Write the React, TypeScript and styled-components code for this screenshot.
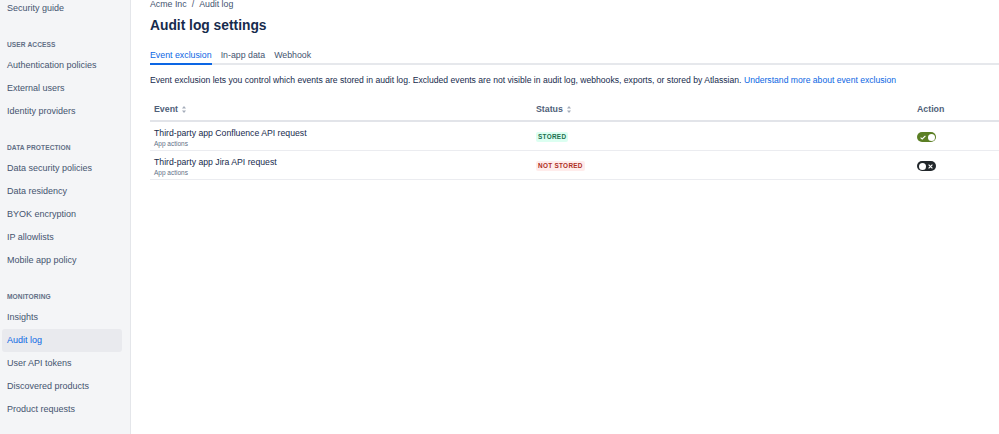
import React from "react";
import styled, { createGlobalStyle } from "styled-components";

const GlobalStyle = createGlobalStyle`
  html, body {
    margin: 0;
    padding: 0;
    background: #ffffff;
    font-family: "Liberation Sans", Arial, sans-serif;
    color: #172b4d;
    overflow: hidden;
  }
  * { box-sizing: border-box; }
`;

const Layout = styled.div`
  display: flex;
  width: 999px;
  height: 434px;
  overflow: hidden;
`;

const Sidebar = styled.aside`
  width: 131px;
  flex-shrink: 0;
  background: #f4f5f7;
  border-right: 1px solid #e4e6ea;
  padding: 0 8px 0 2px;
`;

const NavList = styled.nav`
  display: flex;
  flex-direction: column;
  margin-top: -3px;
`;

const NavHeading = styled.div`
  font-size: 6.6px;
  font-weight: 700;
  letter-spacing: 0.1px;
  color: #626f86;
  line-height: 10px;
  padding-left: 5px;
  margin: 20px 0 4px;
`;

const NavItem = styled.a<{ $active?: boolean }>`
  display: block;
  height: 23px;
  line-height: 23px;
  padding-left: 5px;
  border-radius: 3px;
  font-size: 9px;
  color: ${(p) => (p.$active ? "#0c66e4" : "#44546f")};
  background: ${(p) => (p.$active ? "#e9eaee" : "transparent")};
  text-decoration: none;
  white-space: nowrap;
`;

const Main = styled.main`
  flex: 1;
  padding: 0 0 0 19px;
  min-width: 0;
`;

const Breadcrumb = styled.div`
  margin-top: -2px;
  font-size: 8.8px;
  line-height: 12px;
  color: #44546f;

  span {
    margin: 0 5px;
  }
`;

const Title = styled.h1`
  margin: 6px 0 0;
  font-size: 13.8px;
  line-height: 20px;
  font-weight: 700;
  color: #172b4d;
`;

const Tabs = styled.div`
  display: flex;
  gap: 9px;
  margin-top: 9px;
  border-bottom: 2px solid #e6e8ec;
`;

const Tab = styled.div<{ $active?: boolean }>`
  font-size: 8.8px;
  line-height: 12px;
  padding: 4px 0 2px;
  margin-bottom: -2px;
  color: ${(p) => (p.$active ? "#0c66e4" : "#44546f")};
  border-bottom: 2px solid ${(p) => (p.$active ? "#0c66e4" : "transparent")};
`;

const Description = styled.p`
  margin: 9px 0 0;
  font-size: 8.62px;
  line-height: 12px;
  color: #172b4d;
  white-space: nowrap;

  a {
    color: #0c66e4;
    text-decoration: none;
  }
`;

const Table = styled.div`
  margin-top: 10px;
  display: grid;
  grid-template-columns: 382px 381px 1fr;
`;

const HeadCell = styled.div`
  display: flex;
  align-items: center;
  gap: 4px;
  height: 26px;
  padding: 2px 0 0 4px;
  font-size: 8.8px;
  font-weight: 700;
  color: #505f79;
  border-bottom: 2px solid #e2e4e9;
`;

const Cell = styled.div`
  display: flex;
  flex-direction: column;
  justify-content: flex-start;
  padding: 6px 0 2px 4px;
  height: 29px;
  border-bottom: 1px solid #ebecf0;
`;

const EventName = styled.div`
  font-size: 8.7px;
  line-height: 11px;
  color: #172b4d;
`;

const EventGroup = styled.div`
  font-size: 6.5px;
  line-height: 9px;
  color: #626f86;
`;

const Badge = styled.span<{ $tone: "success" | "danger" }>`
  display: inline-block;
  align-self: flex-start;
  margin-top: 4px;
  padding: 0 2px;
  height: 10px;
  line-height: 10px;
  border-radius: 2px;
  font-size: 6.4px;
  font-weight: 700;
  letter-spacing: 0.3px;
  color: ${(p) => (p.$tone === "success" ? "#216e4e" : "#ae2e24")};
  background: ${(p) => (p.$tone === "success" ? "#dcfff1" : "#ffeceb")};
`;

const Toggle = styled.span<{ $on?: boolean }>`
  position: relative;
  display: inline-flex;
  align-items: center;
  justify-content: ${(p) => (p.$on ? "flex-start" : "flex-end")};
  align-self: flex-start;
  margin-top: 4px;
  width: 19px;
  height: 10px;
  border-radius: 5px;
  padding: 0 3px;
  background: ${(p) => (p.$on ? "#5b7f24" : "#22272b")};

  &::after {
    content: "";
    position: absolute;
    top: 1.5px;
    ${(p) => (p.$on ? "right: 1.5px;" : "left: 1.5px;")}
    width: 7px;
    height: 7px;
    border-radius: 50%;
    background: #ffffff;
  }
`;

const SortIcon = () => (
  <svg width="4" height="7" viewBox="0 0 4 7" fill="#a5adba">
    <path d="M2 0 L4 2.5 H0 Z" />
    <path d="M2 7 L4 4.5 H0 Z" />
  </svg>
);

const CheckIcon = () => (
  <svg width="6" height="5" viewBox="0 0 6 5" fill="none" stroke="#fff" strokeWidth="1.1">
    <path d="M0.6 2.6 L2.2 4 L5.4 0.8" />
  </svg>
);

const CrossIcon = () => (
  <svg width="5" height="5" viewBox="0 0 5 5" fill="none" stroke="#fff" strokeWidth="1.1">
    <path d="M0.6 0.6 L4.4 4.4 M4.4 0.6 L0.6 4.4" />
  </svg>
);

const sections = [
  { heading: "", items: ["Security guide"] },
  {
    heading: "USER ACCESS",
    items: ["Authentication policies", "External users", "Identity providers"],
  },
  {
    heading: "DATA PROTECTION",
    items: [
      "Data security policies",
      "Data residency",
      "BYOK encryption",
      "IP allowlists",
      "Mobile app policy",
    ],
  },
  {
    heading: "MONITORING",
    items: [
      "Insights",
      "Audit log",
      "User API tokens",
      "Discovered products",
      "Product requests",
    ],
  },
];

const events = [
  { name: "Third-party app Confluence API request", group: "App actions", stored: true },
  { name: "Third-party app Jira API request", group: "App actions", stored: false },
];

export default function App() {
  return (
    <Layout>
      <GlobalStyle />
      <Sidebar>
        <NavList>
          {sections.map((s) => (
            <React.Fragment key={s.heading || "top"}>
              {s.heading && <NavHeading>{s.heading}</NavHeading>}
              {s.items.map((item) => (
                <NavItem key={item} $active={item === "Audit log"}>
                  {item}
                </NavItem>
              ))}
            </React.Fragment>
          ))}
        </NavList>
      </Sidebar>
      <Main>
        <Breadcrumb>
          Acme Inc<span>/</span>Audit log
        </Breadcrumb>
        <Title>Audit log settings</Title>
        <Tabs>
          <Tab $active>Event exclusion</Tab>
          <Tab>In-app data</Tab>
          <Tab>Webhook</Tab>
        </Tabs>
        <Description>
          Event exclusion lets you control which events are stored in audit log. Excluded
          events are not visible in audit log, webhooks, exports, or stored by Atlassian.{" "}
          <a href="#">Understand more about event exclusion</a>
        </Description>
        <Table>
          <HeadCell>
            Event <SortIcon />
          </HeadCell>
          <HeadCell>
            Status <SortIcon />
          </HeadCell>
          <HeadCell>Action</HeadCell>
          {events.map((e) => (
            <React.Fragment key={e.name}>
              <Cell>
                <EventName>{e.name}</EventName>
                <EventGroup>{e.group}</EventGroup>
              </Cell>
              <Cell>
                <Badge $tone={e.stored ? "success" : "danger"}>
                  {e.stored ? "STORED" : "NOT STORED"}
                </Badge>
              </Cell>
              <Cell>
                <Toggle $on={e.stored}>{e.stored ? <CheckIcon /> : <CrossIcon />}</Toggle>
              </Cell>
            </React.Fragment>
          ))}
        </Table>
      </Main>
    </Layout>
  );
}
